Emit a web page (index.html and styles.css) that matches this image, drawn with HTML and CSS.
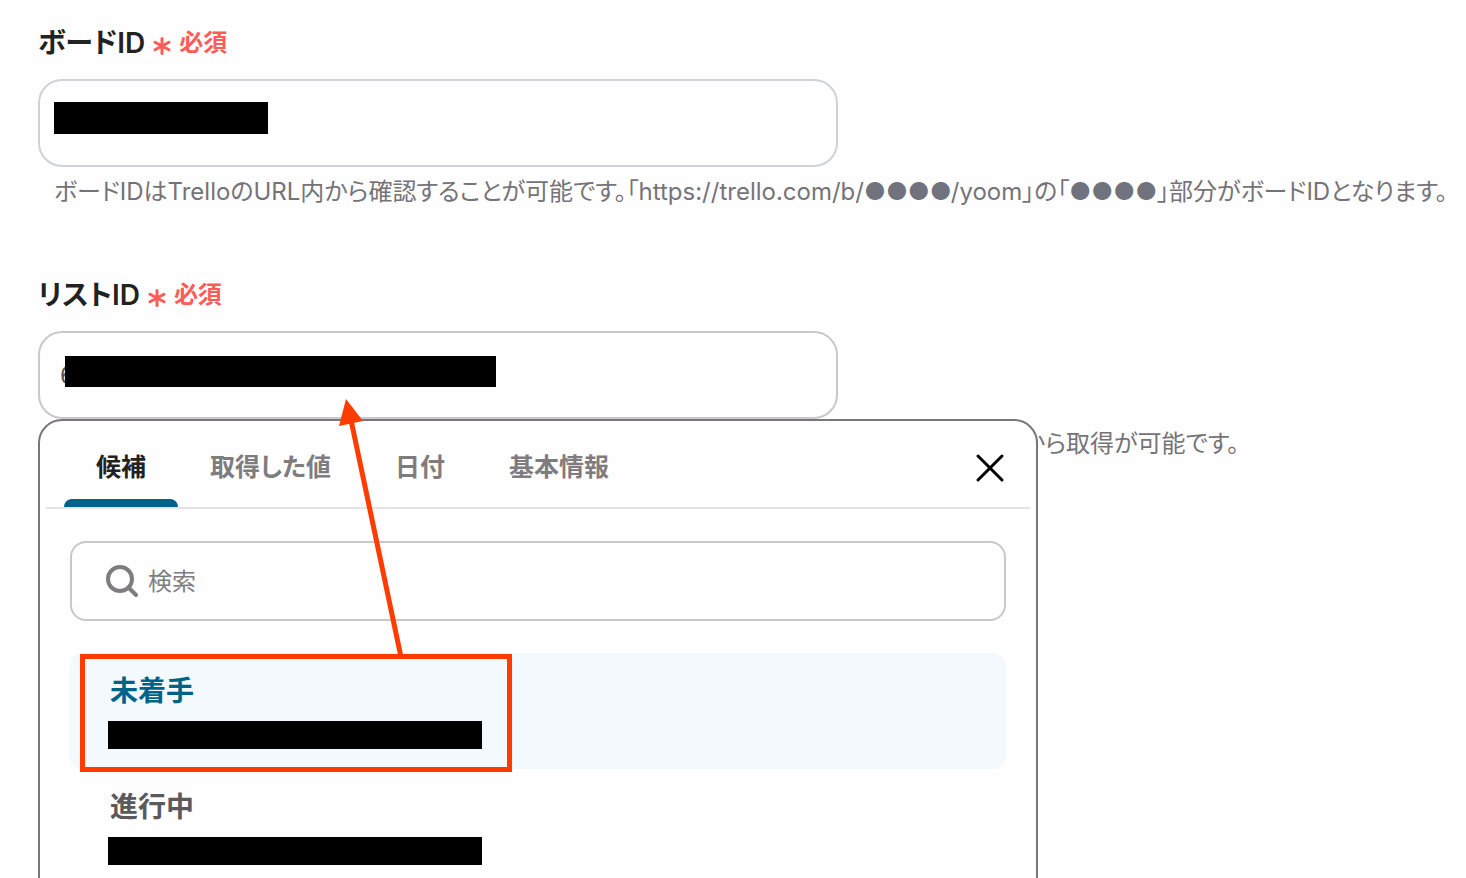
FILE: index.html
```html
<!DOCTYPE html>
<html lang="ja">
<head>
<meta charset="UTF-8">
<title>Trello</title>
<link rel="stylesheet" href="styles.css">
</head>
<body>

<form class="form">
	<div class="field">
		<div class="field-head">
			<label class="field-label" for="boardId">ボードID</label>
			<span class="required">
				<svg class="required-mark" viewBox="0 0 18 18"><path d="M9 1.5v15M2 5.2l14 7.6M16 5.2L2 12.8" /></svg>
				必須
			</span>
		</div>
		<div class="input-wrap">
			<input type="text" id="boardId" class="input input-board">
			<span class="mask mask-board"></span>
		</div>
		<p class="help">ボードIDはTrelloのURL内から確認することが可能です。「https://trello.com/b/<span class="dots">●●●●</span>/yoom」の「<span class="dots">●●●●</span>」部分がボードIDとなります。</p>
	</div>

	<div class="field">
		<div class="field-head">
			<label class="field-label" for="listId">リストID</label>
			<span class="required">
				<svg class="required-mark" viewBox="0 0 18 18"><path d="M9 1.5v15M2 5.2l14 7.6M16 5.2L2 12.8" /></svg>
				必須
			</span>
		</div>
		<div class="input-wrap">
			<input type="text" id="listId" class="input" value="6">
			<span class="mask mask-list"></span>

			<div class="dropdown">
				<div class="tabs">
					<button type="button" class="tab active">候補</button>
					<button type="button" class="tab">取得した値</button>
					<button type="button" class="tab">日付</button>
					<button type="button" class="tab">基本情報</button>
					<button type="button" class="close" aria-label="閉じる">
						<svg viewBox="0 0 30 30"><path d="M3 3l24 24M27 3L3 27" /></svg>
					</button>
				</div>
				<label class="search">
					<svg class="search-icon" viewBox="0 0 32 32"><circle cx="14" cy="14" r="12" /><path d="M22.5 22.5l7.5 7.5" /></svg>
					<input type="search" class="search-input" placeholder="検索">
				</label>
				<div class="options">
					<button type="button" class="option selected">
						<span class="option-name">未着手</span>
						<span class="option-id"></span>
						<span class="highlight"></span>
					</button>
					<button type="button" class="option">
						<span class="option-name">進行中</span>
						<span class="option-id"></span>
					</button>
				</div>
				<svg class="arrow" viewBox="0 0 70 260">
					<path class="arrow-line" d="M63 259L13 22" />
					<path class="arrow-head" d="M8 1L1 28l24-5z" />
				</svg>
			</div>
		</div>
		<p class="help help-list">から取得が可能です。</p>
	</div>
</form>

</body>
</html>
```
FILE: styles.css
```css
* {
	box-sizing: border-box;
}

body {
	margin: 0;
	height: 100vh;
	overflow: hidden;
	background: #fefefe;
	color: #222;
	font-family: Inter, "Noto Sans CJK JP", sans-serif;
	font-feature-settings: "palt";
}

button, input {
	font: inherit;
	font-feature-settings: inherit;
	color: inherit;
	background: none;
	border: 0;
	padding: 0;
	margin: 0;
}

/* *** Fields *** */
.form {
	padding: 23px 0 0 38px;
}

.field {
	height: 252px;
}

.field-head {
	display: flex;
	align-items: center;
	gap: 8px;
	height: 40px;
	margin-bottom: 16px;
}

.field-label {
	font-size: 28px;
	font-weight: 600;
	line-height: 40px;
}

.required {
	display: flex;
	align-items: center;
	gap: 8px;
	color: #ff5c58;
	font-size: 24px;
	font-weight: 600;
	line-height: 40px;
}

.required-mark {
	width: 18px;
	height: 18px;
	margin-top: 6px;
	fill: none;
	stroke: currentColor;
	stroke-width: 3;
	stroke-linecap: round;
}

.input-wrap {
	position: relative;
}

.input {
	display: block;
	width: 800px;
	max-width: 100%;
	height: 88px;
	padding: 0 20px;
	border: 2px solid #cac8ca;
	border-radius: 24px;
	font-size: 24px;
	color: #555;
}

.input-board {
	border-color: #cfd1db;
}

.help {
	margin: 8px 0 0;
	padding-left: 16px;
	color: #757378;
	font-size: 24px;
	line-height: 34px;
	white-space: nowrap;
}

.help-list {
	padding-left: 984px;
}

.dots {
	color: #70737e;
}

/* *** Masked values *** */
.mask {
	position: absolute;
	background: #000;
}

.mask-board {
	left: 16px;
	top: 23px;
	width: 214px;
	height: 32px;
}

.mask-list {
	left: 27px;
	top: 25px;
	width: 431px;
	height: 31px;
}

/* *** Dropdown *** */
.dropdown {
	position: absolute;
	top: 100%;
	left: 0;
	width: 1000px;
	padding: 0 6px 32px;
	background: #fefefe;
	border: 2px solid #7a777a;
	border-radius: 24px;
}

.tabs {
	display: flex;
	height: 88px;
	padding: 0 18px;
	border-bottom: 2px solid #e4e4e5;
}

.tab {
	padding: 10px 32px 0;
	color: #7f7c7f;
	font-size: 25px;
	font-weight: 600;
	border-bottom: 8px solid transparent;
}

.tab.active {
	color: #222;
	position: relative;
}

.tab.active::after {
	content: "";
	position: absolute;
	left: 0;
	right: 0;
	bottom: -8px;
	height: 8px;
	background: #006287;
	border-radius: 8px 8px 0 0;
}

.close {
	display: flex;
	align-items: center;
	margin-left: auto;
	padding: 8px 7px 0 0;
}

.close svg {
	width: 30px;
	height: 30px;
	stroke: #000;
	stroke-width: 3;
	stroke-linecap: round;
}

.search {
	display: flex;
	align-items: center;
	gap: 10px;
	height: 80px;
	margin: 32px 24px;
	padding: 0 34px;
	border: 2px solid #c9c7c9;
	border-radius: 16px;
}

.search-icon {
	width: 32px;
	height: 32px;
	fill: none;
	stroke: #7f7c7f;
	stroke-width: 4;
	stroke-linecap: round;
}

.search-input {
	flex: 1;
	font-size: 24px;
	outline: 0;
}

.search-input::placeholder {
	color: #7f7c7f;
}

.options {
	margin: 0 24px;
}

.option {
	position: relative;
	display: flex;
	flex-direction: column;
	align-items: flex-start;
	width: 100%;
	height: 116px;
	padding: 18px 38px 0;
	border-radius: 12px;
	color: #5b595c;
}

.option.selected {
	background: #f4f9fd;
	color: #006287;
}

.option-name {
	padding-left: 2px;
	font-size: 28px;
	font-weight: 600;
	line-height: 40px;
}

.option-id {
	width: 374px;
	height: 28px;
	margin-top: 10px;
	background: #000;
}

/* *** Annotation *** */
.highlight {
	position: absolute;
	left: 10px;
	top: 1px;
	width: 432px;
	height: 118px;
	border: 5px solid #ff3c00;
}

.arrow {
	position: absolute;
	left: 298px;
	top: -23px;
	width: 70px;
	height: 260px;
}

.arrow-line {
	stroke: #ff3c00;
	stroke-width: 5;
}

.arrow-head {
	fill: #ff3c00;
}
```
